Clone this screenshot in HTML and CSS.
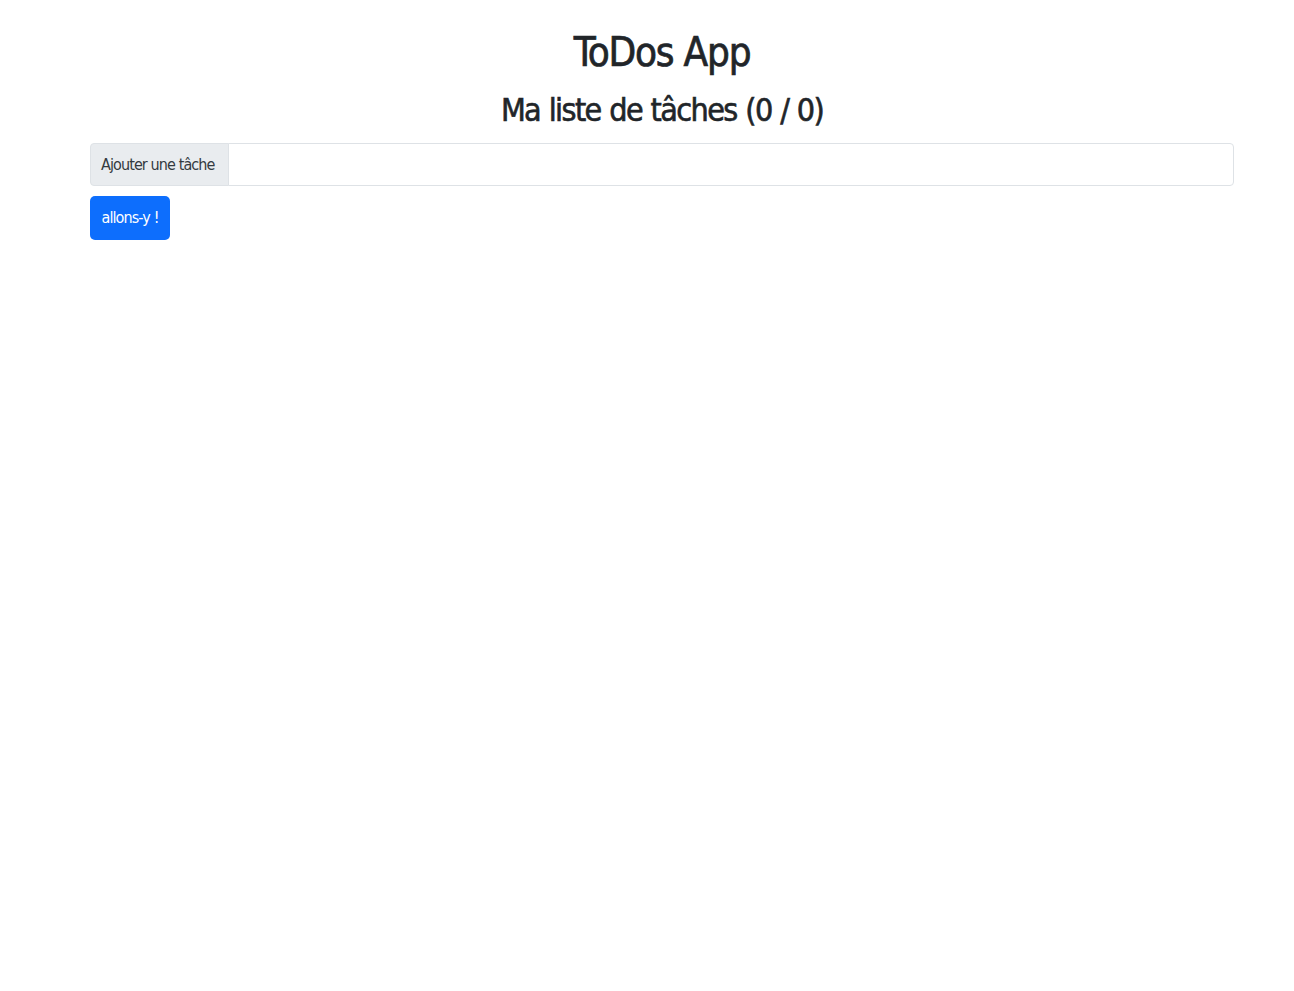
FILE: index.html
```html
<!DOCTYPE html>
<html lang="fr">
<head>
<meta charset="utf-8">
<title>ToDos App</title>
<link rel="stylesheet" href="styles.css">
</head>
<body>
<div class="container">
  <h1 class="title">ToDos App</h1>
  <h2 class="subtitle">Ma liste de tâches (0 / 0)</h2>
  <form class="todo-form">
    <div class="input-group">
      <span class="addon">Ajouter une tâche</span>
      <input class="field" type="text">
    </div>
    <button type="button" class="btn">allons-y !</button>
  </form>
</div>
</body>
</html>
```

FILE: styles.css
```css
html, body {
  margin: 0;
  padding: 0;
  background: #fff;
}
body {
  font-family: "DejaVu Sans Condensed", "DejaVu Sans", sans-serif;
  font-stretch: condensed;
  color: #212529;
}
.container {
  margin-left: 90px;
  width: 1144px;
  padding-top: 23px;
}
.title {
  margin: 0;
  text-align: center;
  font-size: 40px;
  line-height: 58px;
  font-weight: 400;
  -webkit-text-stroke: 0.7px #212529;
  letter-spacing: -1.2px;
}
.subtitle {
  margin: 0;
  text-align: center;
  font-size: 32px;
  line-height: 58px;
  font-weight: 400;
  -webkit-text-stroke: 0.6px #212529;
  letter-spacing: -1.6px;
  word-spacing: 1px;
}
.todo-form {
  margin-top: 4px;
  display: flex;
  flex-direction: column;
  align-items: flex-start;
  gap: 10px;
}
.input-group {
  display: flex;
  width: 100%;
  height: 43px;
  box-sizing: border-box;
}
.addon {
  display: flex;
  align-items: center;
  box-sizing: border-box;
  width: 139px;
  padding: 0 10px;
  background: #e9ecef;
  border: 1px solid #dee2e6;
  border-radius: 4px 0 0 4px;
  font-size: 16px;
  color: #343a40;
  white-space: nowrap;
  letter-spacing: -0.9px;
}
.field {
  flex: 1;
  margin: 0;
  margin-left: -1px;
  box-sizing: border-box;
  border: 1px solid #dee2e6;
  border-radius: 0 4px 4px 0;
  background: #fff;
  outline: none;
}
.btn {
  box-sizing: border-box;
  width: 80px;
  height: 44px;
  border: 0;
  border-radius: 5px;
  background: #0d6efd;
  color: #fff;
  font-family: inherit;
  font-stretch: condensed;
  font-size: 16px;
  letter-spacing: -0.9px;
  padding: 0 0 2px;
}
```
